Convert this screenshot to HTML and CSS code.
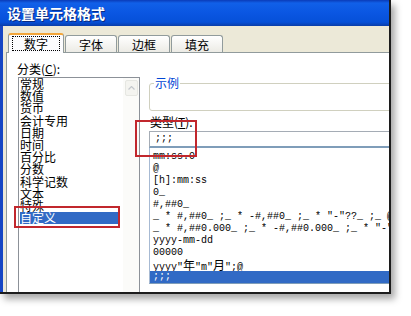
FILE: index.html
```html
<!DOCTYPE html>
<html lang="zh">
<head>
    <meta charset="UTF-8">
    <meta name="viewport" content="width=device-width, initial-scale=1.0">
    <title>设置单元格格式</title>
    <link rel="stylesheet" href="styles.css">
</head>
<body>

    <div class="window">
        <div class="titlebar">设置单元格格式</div>

        <div class="frame">
            <div class="tabs">
                <div class="tab active"><span class="focus">数字</span></div>
                <div class="tab">字体</div>
                <div class="tab">边框</div>
                <div class="tab">填充</div>
            </div>

            <div class="panel">
                <!-- 分类 -->
                <div class="category">
                    <div class="label">分类(<u>C</u>):</div>
                    <div class="listbox">
                        <ul class="items">
                            <li>常规</li>
                            <li>数值</li>
                            <li>货币</li>
                            <li>会计专用</li>
                            <li>日期</li>
                            <li>时间</li>
                            <li>百分比</li>
                            <li>分数</li>
                            <li>科学记数</li>
                            <li>文本</li>
                            <li>特殊</li>
                            <li class="selected">自定义</li>
                        </ul>
                        <div class="scrollbar">
                            <div class="scroll-up">
                                <svg width="7" height="4" viewBox="0 0 7 4"><polyline points="0.5,3.5 3.5,0.5 6.5,3.5" fill="none" stroke="#c4c8cc" stroke-width="1.2"/></svg>
                            </div>
                        </div>
                    </div>
                </div>

                <!-- 示例 / 类型 -->
                <div class="format">
                    <fieldset class="sample"><legend>示例</legend></fieldset>
                    <div class="label type-label">类型(<u>T</u>):</div>
                    <div class="type-input">;;;</div>
                    <ul class="type-list">
                        <li>mm:ss.0</li>
                        <li>@</li>
                        <li>[h]:mm:ss</li>
                        <li>0_</li>
                        <li>#,##0_</li>
                        <li>_ * #,##0_ ;_ * -#,##0_ ;_ * "-"??_ ;_ @_ </li>
                        <li>_ * #,##0.000_ ;_ * -#,##0.000_ ;_ * "-"???_ ;_ @_ </li>
                        <li>yyyy-mm-dd</li>
                        <li>00000</li>
                        <li>yyyy"<span class="cjk">年</span>"m"<span class="cjk">月</span>";@</li>
                        <li class="selected">;;;</li>
                    </ul>
                </div>
            </div>
        </div>
    </div>

    <!-- 标注框 -->
    <div class="mark mark-type"></div>
    <div class="mark mark-custom"></div>

</body>
</html>
```

FILE: styles.css
```css
html, body {
    margin: 0;
    padding: 0;
}

body {
    position: relative;
    width: 411px;
    height: 316px;
    overflow: hidden;
    background: #fff;
    color: #000;
    font-family: "Noto Sans CJK SC", sans-serif;
    font-size: 12px;
}

ul {
    list-style: none;
    margin: 0;
    padding: 0;
}

u {
    text-underline-offset: 1px;
}

.window {
    width: 389px;
    height: 292px;
    display: flex;
    flex-direction: column;
    overflow: hidden;
    background: #ece9d8;
    border-right: 2px solid #1c1c1c;
    border-bottom: 2px solid #1c1c1c;
    box-shadow: 4px 5px 7px rgba(0, 0, 0, 0.35);
}

.titlebar {
    flex: none;
    height: 26px;
    line-height: 26px;
    padding-left: 7px;
    color: #fff;
    font-size: 14px;
    font-weight: bold;
    text-shadow: 1px 1px 0 #0a2a80;
    background: linear-gradient(to bottom,
        #0a3bb8 0,
        #1160e8 3px,
        #0a56e2 50%,
        #0650d8 85%,
        #0a3da8 100%);
}

.frame {
    flex: 1;
    display: flex;
    flex-direction: column;
    min-height: 0;
    border-left: 3px solid #1646c4;
}

.tabs {
    flex: none;
    height: 26px;
    display: flex;
    align-items: flex-end;
    padding-left: 5px;
}

.tab {
    width: 52px;
    height: 17px;
    line-height: 17px;
    margin-left: 1px;
    box-sizing: border-box;
    text-align: center;
    border: 1px solid #919b9c;
    border-bottom: none;
    border-radius: 3px 3px 0 0;
    background: linear-gradient(#ffffff, #ecebe5);
}

.tab.active {
    position: relative;
    z-index: 1;
    width: 56px;
    height: 20px;
    margin-left: 0;
    margin-bottom: -1px;
    line-height: normal;
    background: #fcfcfe;
    border-top: 2px solid #f2a53a;
}

.focus {
    display: block;
    height: 15px;
    margin: 1px 3px 0;
    box-sizing: border-box;
    line-height: 13px;
    border: 1px dotted #000;
}

.panel {
    flex: 1;
    min-height: 0;
    display: flex;
    margin-left: 3px;
    background: #fff;
    border-top: 1px solid #919b9c;
    border-left: 1px solid #919b9c;
}

.label {
    line-height: 14px;
}

.category {
    flex: none;
    display: flex;
    flex-direction: column;
    padding: 9px 0 0 10px;
}

.listbox {
    flex: 1;
    display: flex;
    width: 122px;
    margin: 1px 0 0 1px;
    box-sizing: border-box;
    border: 1px solid #8c9198;
    border-bottom: none;
}

.items {
    flex: 1;
    padding: 0 4px 0 1px;
}

.items li {
    height: 12.2px;
    line-height: 12.2px;
    white-space: nowrap;
}

.items li.selected {
    background: #316ac5;
    color: #fff;
}

.scrollbar {
    flex: none;
    width: 16px;
    background: #fbfbf9;
}

.scroll-up {
    height: 14px;
    margin: 2px 1px 0 2px;
    display: flex;
    align-items: center;
    justify-content: center;
    border: 1px solid #e6e7e2;
    border-radius: 2px;
    background: #f4f4f0;
}

.format {
    flex: none;
    width: 262px;
    display: flex;
    flex-direction: column;
    padding-top: 25px;
    margin-left: 9px;
}

.sample {
    margin: 0;
    padding: 0;
    height: 33px;
    box-sizing: border-box;
    border: 1px solid #d0d0bf;
    border-radius: 3px;
}

.sample legend {
    margin-left: 4px;
    padding: 0 1px;
    line-height: 10px;
    color: #0046d5;
}

.type-label {
    margin-top: 4px;
    padding-left: 1px;
}

.type-input {
    height: 17px;
    margin-top: 2px;
    box-sizing: border-box;
    padding-left: 5px;
    line-height: 14px;
    font-family: "Liberation Mono", monospace;
    font-size: 10px;
    border: 1px solid #a5acb5;
    border-bottom: 2px solid #7f9db9;
}

.type-list {
    height: 136px;
    box-sizing: border-box;
    padding-top: 3px;
    overflow: hidden;
    border-left: 1px solid #a7bad3;
    border-bottom: 1px solid #7f9db9;
    font-family: "Liberation Mono", "Noto Sans CJK SC", monospace;
    font-size: 10px;
}

.type-list li {
    height: 12px;
    line-height: 12px;
    padding-left: 3px;
    overflow: hidden;
    white-space: pre;
}

.type-list li.selected {
    background: #316ac5;
    color: #fff;
}

.cjk {
    font-family: "Noto Sans CJK SC", sans-serif;
    font-size: 12px;
}

.mark {
    position: absolute;
    box-sizing: border-box;
    border: 2px solid #c1272d;
}

.mark-type {
    left: 135px;
    top: 120px;
    width: 62px;
    height: 37px;
}

.mark-custom {
    left: 14px;
    top: 206px;
    width: 106px;
    height: 22px;
}
```
